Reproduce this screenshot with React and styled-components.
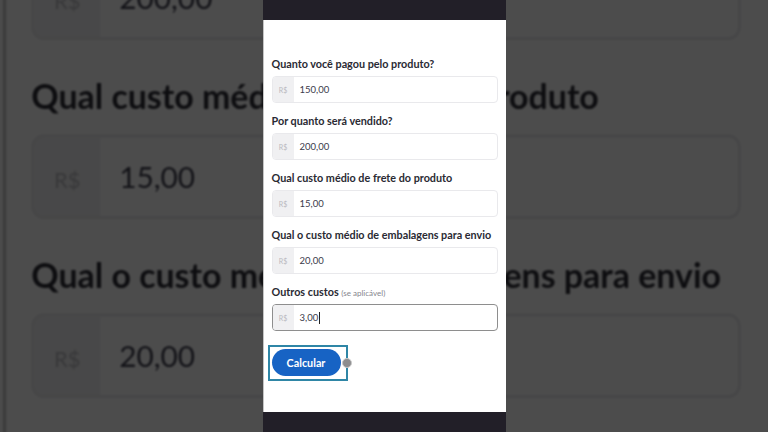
import React from 'react'
import styled, { createGlobalStyle } from 'styled-components'

const GlobalStyle = createGlobalStyle`
	html, body {
		margin: 0;
		padding: 0;
		background: #4b4b4b;
		overflow: hidden;
	}
	* {
		box-sizing: border-box;
	}
`

const fields = [
	{ label: 'Quanto você pagou pelo produto?', value: '150,00' },
	{ label: 'Por quanto será vendido?', value: '200,00' },
	{ label: 'Qual custo médio de frete do produto', value: '15,00' },
	{ label: 'Qual o custo médio de embalagens para envio', value: '20,00' },
	{ label: 'Outros custos', hint: '(se aplicável)', value: '3,00', focused: true },
]

// styled components
const Stage = styled.div`
	position: relative;
	width: 768px;
	height: 432px;
	overflow: hidden;
	display: flex;
	justify-content: center;
	font-family: 'Lato', 'Noto Sans', sans-serif;
`

const Backdrop = styled.div`
	position: absolute;
	inset: 0;
	display: flex;
	justify-content: center;
	filter: blur(1.2px) brightness(0.3);
	pointer-events: none;
`

const Phone = styled.div`
	position: relative;
	width: 243px;
	height: 432px;
	display: flex;
	flex-direction: column;
	background: #ffffff;
	transform: ${({ $zoom }) => ($zoom ? `scale(${$zoom})` : 'none')};
	transform-origin: center center;
`

const Bar = styled.div`
	height: 20px;
	flex-shrink: 0;
	background: #221f28;
`

const Panel = styled.div`
	flex: 1;
	display: flex;
	flex-direction: column;
	gap: 11px;
	padding: 37px 8px 0 8px;
	background: #ffffff;
	border-left: 1px solid #c4c4c4;
`

const Field = styled.div`
	display: flex;
	flex-direction: column;
	gap: 5px;
`

const Label = styled.label`
	height: 14px;
	line-height: 14px;
	font-size: 10.8px;
	font-weight: 700;
	color: #2a2a33;
	white-space: nowrap;
`

const Hint = styled.span`
	font-size: 8px;
	font-weight: 400;
	color: #85858d;
`

const InputBox = styled.div`
	height: 27px;
	display: flex;
	align-items: stretch;
	border: 1px solid ${({ $focused }) => ($focused ? '#8e8e8e' : '#e9e9ec')};
	border-radius: 4px;
	overflow: hidden;
	background: #ffffff;
`

const Prefix = styled.span`
	width: 21px;
	display: flex;
	align-items: center;
	justify-content: center;
	background: #f0f0f2;
	font-size: 7px;
	color: #b9b9be;
`

const Value = styled.span`
	display: flex;
	align-items: center;
	padding-left: 6px;
	font-size: 9.5px;
	color: #3b3b4b;
`

const Caret = styled.span`
	display: inline-block;
	width: 1px;
	height: 12px;
	margin-left: 1px;
	background: #222;
`

const ButtonRow = styled.div`
	margin-top: 3px;
	display: flex;
`

const FocusRing = styled.div`
	position: relative;
	margin-left: -4px;
	padding: 2px 5px 3px 2px;
	border: 2px solid #2f86a6;
`

const CalcButton = styled.button`
	width: 69px;
	height: 27px;
	border: none;
	border-radius: 14px;
	background: #1763c4;
	color: #ffffff;
	font-family: inherit;
	font-size: 10.8px;
	font-weight: 700;
	display: block;
`

const Pointer = styled.span`
	position: absolute;
	right: -6px;
	top: 50%;
	width: 10px;
	height: 10px;
	margin-top: -5px;
	border-radius: 50%;
	background: #8d8d8f;
	border: 1px solid #c9c9c9;
`

const Form = ({ zoom }) => (
	<Phone $zoom={zoom}>
		<Bar />
		<Panel>
			{fields.map((f) => (
				<Field key={f.label}>
					<Label>
						{f.label} {f.hint && <Hint>{f.hint}</Hint>}
					</Label>
					<InputBox $focused={f.focused}>
						<Prefix>R$</Prefix>
						<Value>
							{f.value}
							{f.focused && <Caret />}
						</Value>
					</InputBox>
				</Field>
			))}
			<ButtonRow>
				<FocusRing>
					<CalcButton>Calcular</CalcButton>
					<Pointer />
				</FocusRing>
			</ButtonRow>
		</Panel>
		<Bar />
	</Phone>
)

const App = () => (
	<>
		<GlobalStyle />
		<Stage>
			<Backdrop>
				<Form zoom={3.14} />
			</Backdrop>
			<Form />
		</Stage>
	</>
)

export default App
